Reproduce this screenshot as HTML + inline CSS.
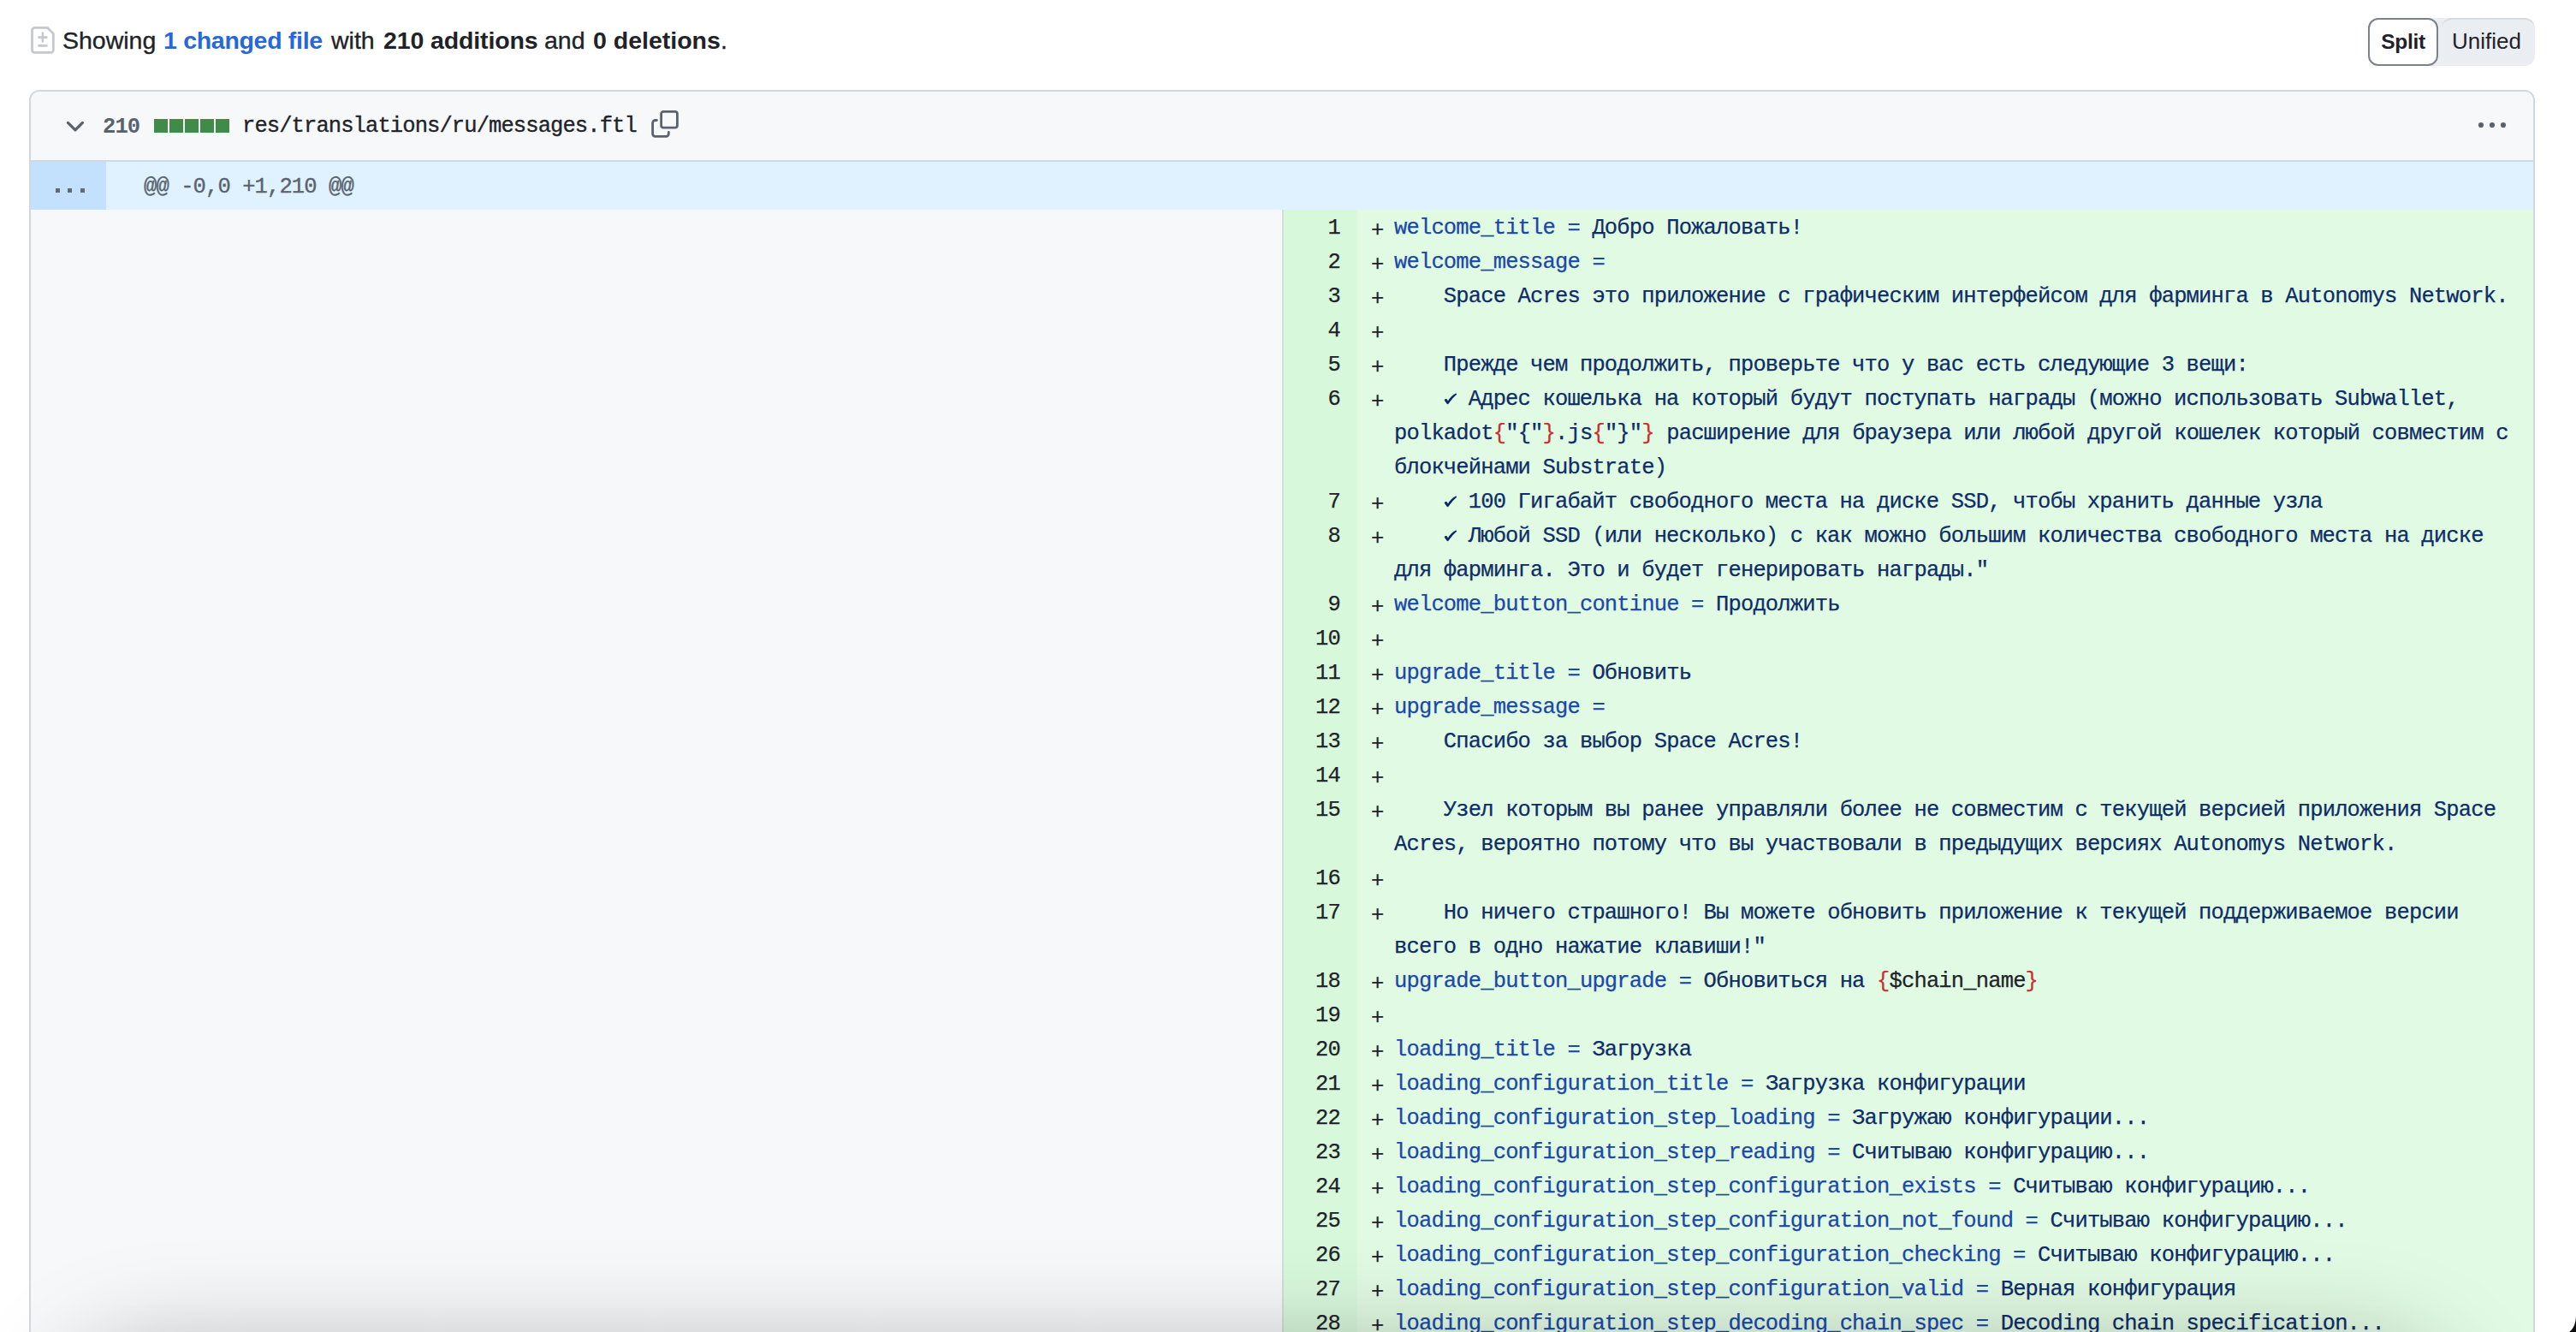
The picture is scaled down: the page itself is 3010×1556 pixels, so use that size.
<!DOCTYPE html>
<html><head><meta charset="utf-8">
<style>
html,body{margin:0;padding:0;background:#fff;}
body{width:3010px;height:1556px;overflow:hidden;position:relative;font-family:"Liberation Sans",sans-serif;color:#1f2328;}
.abs{position:absolute;}
#topicon{left:36px;top:31px;width:28px;height:32px;}
#summary{left:0;top:0;font-size:28.5px;line-height:40px;white-space:nowrap;}
#summary span,#summary a,#summary b{position:absolute;top:27px;}
#summary span{-webkit-text-stroke:0.35px #1f2328;}
#summary b{font-weight:700;}
#summary a{color:#2868d6;font-weight:700;text-decoration:none;}
#seg{left:2767px;top:21px;width:195px;height:56px;background:#eaeef2;border-radius:12px;}
#split{left:2767px;top:21px;width:82px;height:56px;box-sizing:border-box;border:2px solid #7a828c;border-radius:12px;background:#fff;font-weight:700;font-size:24.5px;letter-spacing:-0.3px;line-height:52px;text-align:center;}
#unified{left:2849px;top:21px;width:113px;height:56px;font-size:26px;line-height:55px;text-align:center;}
#unitop{left:2853px;top:21px;width:109px;height:12px;box-sizing:border-box;border-top:2px solid #d6dbe1;border-right:0;border-top-right-radius:12px;border-top-left-radius:12px;}
#box{left:34px;top:105px;width:2928px;height:1600px;box-sizing:border-box;border:2px solid #d1d9e0;border-radius:12px;background:#f6f8fa;overflow:hidden;}
#hdr{left:0;top:0;width:2924px;height:80px;background:#f6f8fa;border-bottom:2px solid #d1d9e0;}
.mono{font-family:"Liberation Mono",monospace;}
#chev{left:42px;top:34px;width:22px;height:14px;}
#count{left:84px;top:21.5px;font-size:25.5px;letter-spacing:-0.9px;line-height:40px;font-weight:700;color:#59636e;}
.sq{position:absolute;top:32px;width:16px;height:16px;background:#3f8b47;}
#fname{left:247px;top:21px;font-size:25.5px;letter-spacing:-0.9px;-webkit-text-stroke:0.35px #1f2328;line-height:40px;color:#1f2328;}
#copy{left:724px;top:21px;width:34px;height:34px;}
#kebab{left:2859.2px;top:35px;width:34px;height:8px;}
#hunk{left:0;top:82px;width:2924px;height:56px;background:#e0f2ff;}
#hunknum{left:0;top:0;width:88px;height:56px;background:#c3e0fc;}
#hunktxt{left:132px;top:9.5px;font-size:25.5px;letter-spacing:-0.9px;-webkit-text-stroke:0.35px #59636e;line-height:40px;color:#59636e;}
.dt{position:absolute;top:31px;width:5px;height:5px;background:#626a74;}
#left{left:0;top:138px;width:1462px;height:1500px;background:#f6f8fa;}
#divider{left:1462px;top:138px;width:2px;height:1500px;background:#d1ded9;}
#numcol{left:1464px;top:138px;width:86px;height:1500px;background:#d8f8dc;}
#codecol{left:1550px;top:138px;width:1374px;height:1500px;background:#e1fae3;}
#rows{left:1464px;top:138px;width:1460px;}
.r{position:relative;height:40px;font-family:"Liberation Mono",monospace;font-size:25.5px;letter-spacing:-0.84px;line-height:40px;white-space:pre;-webkit-text-stroke:0.25px currentColor;}
.n{position:absolute;right:1394px;top:2px;text-align:right;color:#1f2328;}
.p{position:absolute;left:102px;top:4.5px;color:#1f2328;}
.t{position:absolute;left:129px;top:2px;color:#0e2c66;}
.k{color:#1a48a8;}
.o{color:#c8302f;}
.d{color:#1f2328;}
.ck{display:inline-block;width:14.4px;height:40px;vertical-align:top;position:relative;}
.ck svg{position:absolute;left:0;top:12px;}
#shadow{left:85px;top:1598px;width:2765px;height:200px;border-radius:100px;box-shadow:0 0 120px 24px rgba(0,0,0,0.27);}
#corner{left:2990px;top:1536px;width:20px;height:20px;}
</style></head><body>
<svg id="topicon" class="abs" viewBox="0 0 28 32"><path d="M4.5 1.4H19.6L26.3 8.3V27.4a3 3 0 0 1-3 3H4.5a3 3 0 0 1-3-3V4.4a3 3 0 0 1 3-3z" fill="none" stroke="#c5c9ce" stroke-width="2.8" stroke-linejoin="round"/><path d="M13.9 7.6v10M9.4 12.6h9M9.4 22.4h9" stroke="#c5c9ce" stroke-width="2.6" stroke-linecap="round"/></svg>
<div id="summary" class="abs"><span style="left:73px">Showing</span><a style="left:191px;letter-spacing:-0.3px">1 changed file</a><span style="left:387px">with</span><b style="left:448px;letter-spacing:-0.12px">210 additions</b><span style="left:636px">and</span><b style="left:693px">0 deletions</b><span id="dot" style="left:842px">.</span></div>
<div id="seg" class="abs"></div>
<div id="split" class="abs">Split</div>
<div id="unitop" class="abs"></div><div id="unified" class="abs">Unified</div>

<div id="box" class="abs">
  <div id="hdr" class="abs">
    <svg id="chev" class="abs" viewBox="0 0 22 14"><path d="M1.4 2.4L9.9 10.9L18.4 2.4" fill="none" stroke="#59636e" stroke-width="3.3" stroke-linecap="round" stroke-linejoin="round"/></svg>
    <div id="count" class="abs mono">210</div>
    <div class="sq" style="left:144px"></div><div class="sq" style="left:162px"></div><div class="sq" style="left:180px"></div><div class="sq" style="left:198px"></div><div class="sq" style="left:216px"></div>
    <div id="fname" class="abs mono">res/translations/ru/messages.ftl</div>
    <svg id="copy" class="abs" viewBox="0 0 34 34"><rect x="12.6" y="2.4" width="18.8" height="18.8" rx="2.6" fill="none" stroke="#59636e" stroke-width="2.8"/><path d="M7.4 12.5H5.6a3 3 0 0 0-3 3V28.3a3 3 0 0 0 3 3H18.3a3 3 0 0 0 3-3V26.4" fill="none" stroke="#59636e" stroke-width="2.8" stroke-linecap="round"/></svg>
    <svg id="kebab" class="abs" viewBox="0 0 34 8"><circle cx="4" cy="4" r="3.1" fill="#59636e"/><circle cx="17" cy="4" r="3.1" fill="#59636e"/><circle cx="30" cy="4" r="3.1" fill="#59636e"/></svg>
  </div>
  <div id="hunk" class="abs">
    <div id="hunknum" class="abs"><div class="dt" style="left:29px"></div><div class="dt" style="left:43px"></div><div class="dt" style="left:57.5px"></div></div>
    <div id="hunktxt" class="abs mono">@@ -0,0 +1,210 @@</div>
  </div>
  <div id="left" class="abs"></div>
  <div id="divider" class="abs"></div>
  <div id="numcol" class="abs"></div>
  <div id="codecol" class="abs"></div>
  <div id="rows" class="abs">
<div class="r"><span class="n">1</span><span class="p">+</span><span class="t"><span class="k">welcome_title =</span> Добро Пожаловать!</span></div>
<div class="r"><span class="n">2</span><span class="p">+</span><span class="t"><span class="k">welcome_message =</span></span></div>
<div class="r"><span class="n">3</span><span class="p">+</span><span class="t">    Space Acres это приложение с графическим интерфейсом для фарминга в Autonomys Network.</span></div>
<div class="r"><span class="n">4</span><span class="p">+</span><span class="t"></span></div>
<div class="r"><span class="n">5</span><span class="p">+</span><span class="t">    Прежде чем продолжить, проверьте что у вас есть следующие 3 вещи:</span></div>
<div class="r"><span class="n">6</span><span class="p">+</span><span class="t">    <span class="ck"><svg width="16" height="16" viewBox="0 0 16 16"><path d="M0.7 8.3Q1.9 6.3 3.7 7.3L5.0 9.4Q8.4 3.4 14.2 0.6L15.4 1.6Q9.8 6.2 5.8 12.3Q4.8 13.8 3.7 12.7Q1.5 10.3 0.7 8.3Z" fill="#0a2a66"/></svg></span> Адрес кошелька на который будут поступать награды (можно использовать Subwallet,</span></div>
<div class="r"><span class="t">polkadot<span class="o">{</span>"{"<span class="o">}</span>.js<span class="o">{</span>"}"<span class="o">}</span> расширение для браузера или любой другой кошелек который совместим с</span></div>
<div class="r"><span class="t">блокчейнами Substrate)</span></div>
<div class="r"><span class="n">7</span><span class="p">+</span><span class="t">    <span class="ck"><svg width="16" height="16" viewBox="0 0 16 16"><path d="M0.7 8.3Q1.9 6.3 3.7 7.3L5.0 9.4Q8.4 3.4 14.2 0.6L15.4 1.6Q9.8 6.2 5.8 12.3Q4.8 13.8 3.7 12.7Q1.5 10.3 0.7 8.3Z" fill="#0a2a66"/></svg></span> 100 Гигабайт свободного места на диске SSD, чтобы хранить данные узла</span></div>
<div class="r"><span class="n">8</span><span class="p">+</span><span class="t">    <span class="ck"><svg width="16" height="16" viewBox="0 0 16 16"><path d="M0.7 8.3Q1.9 6.3 3.7 7.3L5.0 9.4Q8.4 3.4 14.2 0.6L15.4 1.6Q9.8 6.2 5.8 12.3Q4.8 13.8 3.7 12.7Q1.5 10.3 0.7 8.3Z" fill="#0a2a66"/></svg></span> Любой SSD (или несколько) с как можно большим количества свободного места на диске</span></div>
<div class="r"><span class="t">для фарминга. Это и будет генерировать награды."</span></div>
<div class="r"><span class="n">9</span><span class="p">+</span><span class="t"><span class="k">welcome_button_continue =</span> Продолжить</span></div>
<div class="r"><span class="n">10</span><span class="p">+</span><span class="t"></span></div>
<div class="r"><span class="n">11</span><span class="p">+</span><span class="t"><span class="k">upgrade_title =</span> Обновить</span></div>
<div class="r"><span class="n">12</span><span class="p">+</span><span class="t"><span class="k">upgrade_message =</span></span></div>
<div class="r"><span class="n">13</span><span class="p">+</span><span class="t">    Спасибо за выбор Space Acres!</span></div>
<div class="r"><span class="n">14</span><span class="p">+</span><span class="t"></span></div>
<div class="r"><span class="n">15</span><span class="p">+</span><span class="t">    Узел которым вы ранее управляли более не совместим с текущей версией приложения Space</span></div>
<div class="r"><span class="t">Acres, вероятно потому что вы участвовали в предыдущих версиях Autonomys Network.</span></div>
<div class="r"><span class="n">16</span><span class="p">+</span><span class="t"></span></div>
<div class="r"><span class="n">17</span><span class="p">+</span><span class="t">    Но ничего страшного! Вы можете обновить приложение к текущей поддерживаемое версии</span></div>
<div class="r"><span class="t">всего в одно нажатие клавиши!"</span></div>
<div class="r"><span class="n">18</span><span class="p">+</span><span class="t"><span class="k">upgrade_button_upgrade =</span> Обновиться на <span class="o">{</span><span class="d">$chain_name</span><span class="o">}</span></span></div>
<div class="r"><span class="n">19</span><span class="p">+</span><span class="t"></span></div>
<div class="r"><span class="n">20</span><span class="p">+</span><span class="t"><span class="k">loading_title =</span> Загрузка</span></div>
<div class="r"><span class="n">21</span><span class="p">+</span><span class="t"><span class="k">loading_configuration_title =</span> Загрузка конфигурации</span></div>
<div class="r"><span class="n">22</span><span class="p">+</span><span class="t"><span class="k">loading_configuration_step_loading =</span> Загружаю конфигурации...</span></div>
<div class="r"><span class="n">23</span><span class="p">+</span><span class="t"><span class="k">loading_configuration_step_reading =</span> Считываю конфигурацию...</span></div>
<div class="r"><span class="n">24</span><span class="p">+</span><span class="t"><span class="k">loading_configuration_step_configuration_exists =</span> Считываю конфигурацию...</span></div>
<div class="r"><span class="n">25</span><span class="p">+</span><span class="t"><span class="k">loading_configuration_step_configuration_not_found =</span> Считываю конфигурацию...</span></div>
<div class="r"><span class="n">26</span><span class="p">+</span><span class="t"><span class="k">loading_configuration_step_configuration_checking =</span> Считываю конфигурацию...</span></div>
<div class="r"><span class="n">27</span><span class="p">+</span><span class="t"><span class="k">loading_configuration_step_configuration_valid =</span> Верная конфигурация</span></div>
<div class="r"><span class="n">28</span><span class="p">+</span><span class="t"><span class="k">loading_configuration_step_decoding_chain_spec =</span> Decoding chain specification...</span></div>
  </div>
</div>
<div id="shadow" class="abs"></div>
<svg id="corner" class="abs" viewBox="0 0 20 20"><path d="M20 0.4C20 10 17 16 12 20H20z" fill="#0d0d0d"/></svg>
</body></html>
